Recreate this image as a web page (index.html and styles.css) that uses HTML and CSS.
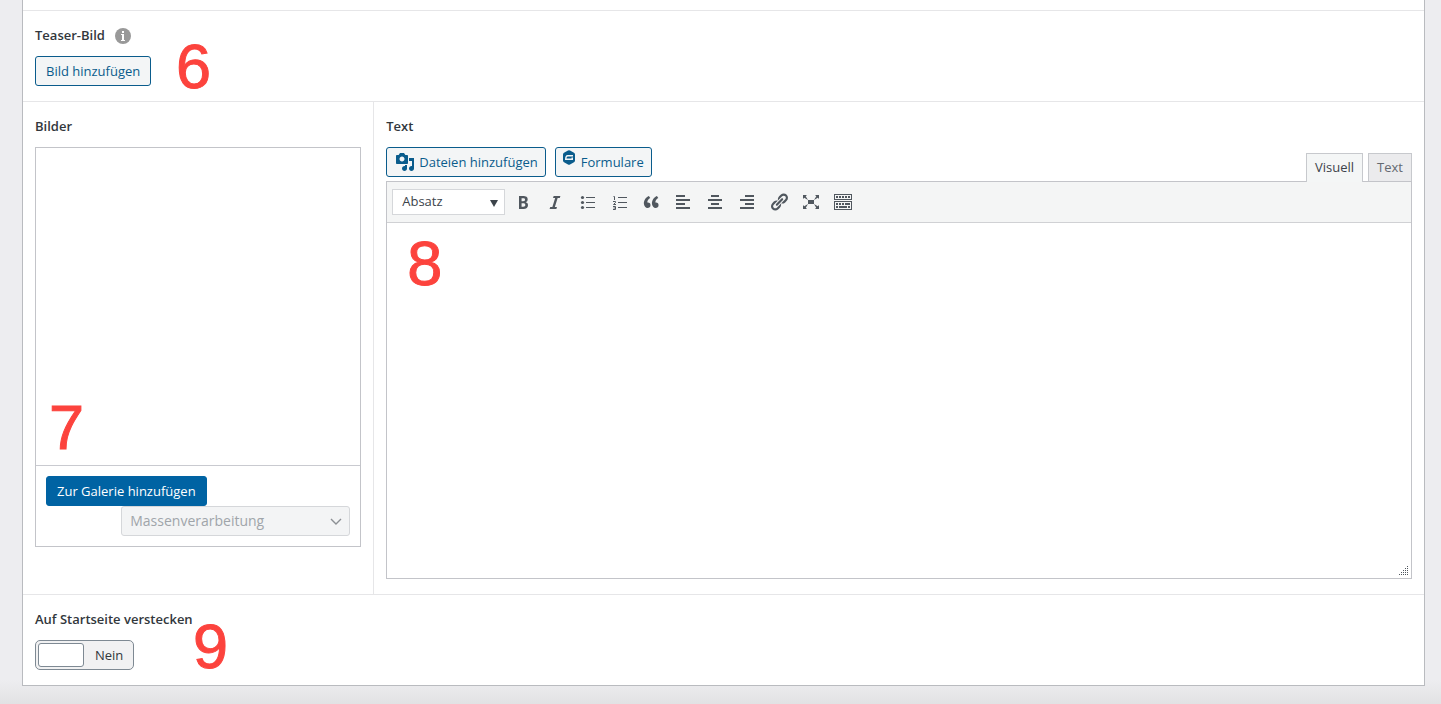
FILE: index.html
```html
<!DOCTYPE html>
<html lang="de">
<head>
  <meta charset="UTF-8" />
  <meta name="viewport" content="width=device-width, initial-scale=1.0"/>
  <title>Beitrag bearbeiten</title>
  <link rel="stylesheet" href="styles.css">
</head>
<body>
  <form class="panel">
    <section class="field">
      <div class="field-label">
        <h2>Teaser-Bild</h2>
        <svg class="info" viewBox="0 0 16 16" aria-hidden="true"><circle cx="8" cy="8" r="8" fill="#999"/><path fill="#fff" d="M7 3h2v2H7zM6 6h3v6h1v1H6v-1h1V7H6z"/></svg>
      </div>
      <button type="button" class="button">Bild hinzufügen</button>
      <span class="mark mark-6">6</span>
    </section>

    <div class="columns">
      <section class="field">
        <div class="field-label"><h2>Bilder</h2></div>
        <div class="gallery">
          <div class="gallery-list"></div>
          <div class="gallery-toolbar">
            <button type="button" class="button button-primary">Zur Galerie hinzufügen</button>
            <div class="select-wrap bulk">
              <select aria-label="Massenverarbeitung" disabled>
                <option>Massenverarbeitung</option>
              </select>
              <svg viewBox="0 0 12 8" aria-hidden="true"><path d="M1 1l5 5 5-5" fill="none" stroke="#8c8f94" stroke-width="1.4"/></svg>
            </div>
          </div>
        </div>
        <span class="mark mark-7">7</span>
      </section>

      <section class="field">
        <div class="field-label"><label for="content">Text</label></div>
        <div class="editor-tools">
          <button type="button" class="button media">
            <svg viewBox="0 0 20 20" aria-hidden="true"><path d="M13 11V4c0-.55-.45-1-1-1h-1.67L9 1H5L3.67 3H2c-.55 0-1 .45-1 1v7c0 .55.45 1 1 1h10c.55 0 1-.45 1-1zM7 4.5c1.38 0 2.5 1.12 2.5 2.5S8.38 9.5 7 9.5 4.5 8.38 4.5 7 5.62 4.5 7 4.5zM14 6h5v10.5c0 1.38-1.12 2.5-2.5 2.5S14 17.88 14 16.5s1.12-2.5 2.5-2.5c.17 0 .34.02.5.05V9h-3V6zm-4 8.05V13h2v3.5c0 1.38-1.12 2.5-2.5 2.5S7 17.88 7 16.5 8.12 14 9.5 14c.17 0 .34.02.5.05z"/></svg>
            Dateien hinzufügen
          </button>
          <button type="button" class="button forms">
            <svg viewBox="0 0 14 16" aria-hidden="true"><path fill-rule="evenodd" d="M6 .6q1-.6 2 0l4 2.2q1 .6 1 1.700v6q0 1.100-1 1.700l-4 2.300q-1 .6-2 0l-4-2.300q-1-.6-1-1.700v-6q0-1.100 1-1.700zM5.500 5C4 5 3 6.500 3 10h8V7.500H9.500v1h-5c.1-1.300.5-2 1.300-2H11V5z"/></svg>
            Formulare
          </button>
          <div class="tabs">
            <button type="button" class="tab active">Visuell</button>
            <button type="button" class="tab">Text</button>
          </div>
        </div>
        <div class="editor">
          <div class="toolbar">
            <div class="select-wrap format">
              <select aria-label="Format">
                <option>Absatz</option>
              </select>
              <svg viewBox="0 0 8 7" aria-hidden="true"><path d="M0 0h8L4 7z" fill="#3c434a"/></svg>
            </div>
            <button type="button" aria-label="Fett"><svg viewBox="0 0 20 20"><path d="M6 4v13h4.54c1.37 0 2.46-.33 3.26-1 .8-.66 1.2-1.58 1.2-2.77 0-.84-.17-1.51-.51-2.01s-.9-.85-1.67-1.03v-.09c.57-.1 1.02-.4 1.36-.9s.51-1.13.51-1.91c0-1.14-.39-1.98-1.17-2.5C12.75 4.26 11.5 4 9.78 4H6zm2.57 5.15V6.26h1.36c.73 0 1.27.11 1.61.32.34.22.51.58.51 1.07 0 .54-.16.92-.47 1.15s-.82.35-1.51.35h-1.5zm0 2.19h1.6c1.44 0 2.16.53 2.16 1.61 0 .6-.17 1.05-.51 1.34s-.86.43-1.57.43H8.57v-3.38z"/></svg></button>
            <button type="button" aria-label="Kursiv"><svg viewBox="0 0 20 20"><path d="M14.78 6h-2.13l-2.8 9h2.12l-.62 2H4.6l.62-2h2.14l2.8-9H8.03l.62-2h6.75z"/></svg></button>
            <button type="button" aria-label="Liste"><svg viewBox="0 0 20 20"><circle cx="5.500" cy="5.500" r="1.600"/><circle cx="5.500" cy="10.500" r="1.600"/><circle cx="5.500" cy="15.500" r="1.600"/><path d="M9 5h9v1H9zM9 10h9v1H9zM9 15h9v1H9z"/></svg></button>
            <button type="button" aria-label="Nummerierte Liste"><svg viewBox="0 0 20 20"><path d="M9 5h9v1H9zM9 10h9v1H9zM9 15h9v1H9z"/><path fill="none" stroke="#50575e" d="M4.500 4.500h1V8M4 9.500h2.500v1L4.500 12.500h2.500M4 14.500h2.500v3H4M4.500 16h2"/></svg></button>
            <button type="button" aria-label="Zitat"><svg viewBox="0 0 20 20"><path d="M9.49 13.22c0-.74-.2-1.38-.61-1.9-.62-.78-1.83-.88-2.53-.72-.29-1.65 1.11-3.75 2.92-4.65L7.88 4c-2.73 1.3-5.42 4.28-4.96 8.05C3.21 14.43 4.59 16 6.54 16c.85 0 1.56-.25 2.12-.75s.83-1.18.83-2.03zm8.05 0c0-.74-.2-1.38-.61-1.9-.63-.78-1.83-.88-2.53-.72-.29-1.65 1.11-3.75 2.92-4.65L15.93 4c-2.73 1.3-5.41 4.28-4.95 8.05.29 2.38 1.66 3.95 3.61 3.95.85 0 1.56-.25 2.12-.75s.83-1.18.83-2.03z"/></svg></button>
            <button type="button" aria-label="Linksbündig"><svg viewBox="0 0 20 20"><path d="M3 3h9v2H3zM3 7h14v2H3zM3 11h9v2H3zM3 15h14v2H3z"/></svg></button>
            <button type="button" aria-label="Zentriert"><svg viewBox="0 0 20 20"><path d="M6 3h8v2H6zM3 7h14v2H3zM6 11h8v2H6zM3 15h14v2H3z"/></svg></button>
            <button type="button" aria-label="Rechtsbündig"><svg viewBox="0 0 20 20"><path d="M8 3h9v2H8zM3 7h14v2H3zM8 11h9v2H8zM3 15h14v2H3z"/></svg></button>
            <button type="button" aria-label="Link"><svg viewBox="0 0 20 20"><path d="M17.74 2.76c1.68 1.69 1.68 4.41 0 6.1l-1.53 1.52c-1.12 1.12-2.7 1.47-4.14 1.09l2.62-2.61.76-.77.76-.76c.84-.84.84-2.2 0-3.04-.84-.85-2.2-.85-3.04 0l-.77.76-3.38 3.38c-.37-1.44-.02-3.02 1.1-4.14l1.52-1.53c1.69-1.68 4.42-1.68 6.1 0zM8.59 13.43l5.34-5.34c.42-.42.42-1.1 0-1.52-.44-.43-1.13-.39-1.53 0l-5.33 5.34c-.42.42-.42 1.1 0 1.52.44.43 1.13.39 1.52 0zm-.76 2.29l4.14-4.15c.38 1.44.03 3.02-1.09 4.14l-1.52 1.53c-1.69 1.68-4.41 1.68-6.1 0-1.68-1.68-1.68-4.42 0-6.1l1.53-1.52c1.12-1.12 2.7-1.47 4.14-1.1l-4.14 4.15c-.85.84-.85 2.2 0 3.05.84.84 2.2.84 3.04 0z"/></svg></button>
            <button type="button" aria-label="Vollbild"><svg viewBox="0 0 20 20"><path d="M7 8h6v4H7zm-5 5v4h4l-1.200-1.200L7 12l-3.800 2.200M14 17h4v-4l-1.200 1.200L13 12l2.200 3.800M14 3l1.300 1.300L13 8l3.800-2.200L18 7V3M6 3H2v4l1.200-1.200L7 8 4.700 4.300"/></svg></button>
            <button type="button" aria-label="Werkzeugleiste umschalten"><svg viewBox="0 0 20 20"><path fill-rule="evenodd" d="M1 2h18v6H1zM2 3v4h16V3zM1 9h18v9H1zM2 10v7h16v-7z"/><path d="M3 4h2v2H3zM6 4h2v2H6zM9 4h2v2H9zM12 4h2v2h-2zM15 4h2v2h-2zM3 11h2v2H3zM6 11h2v2H6zM9 11h2v2H9zM12 11h5v2h-5zM3 14h2v2H3zM6 14h8v2H6zM15 14h2v2h-2z"/></svg></button>
          </div>
          <textarea id="content"></textarea>
          <svg class="grip" viewBox="0 0 10 10" aria-hidden="true"><path d="M8 0h1v1H8zM6 2h1v1H6zM8 2h1v1H8zM4 4h1v1H4zM6 4h1v1H6zM8 4h1v1H8zM2 6h1v1H2zM4 6h1v1H4zM6 6h1v1H6zM8 6h1v1H8zM0 8h1v1H0zM2 8h1v1H2zM4 8h1v1H4zM6 8h1v1H6zM8 8h1v1H8z"/></svg>
        </div>
        <span class="mark mark-8">8</span>
      </section>
    </div>

    <section class="field">
      <div class="field-label"><label for="hide">Auf Startseite verstecken</label></div>
      <label class="switch">
        <input type="checkbox" id="hide">
        <span class="slider"></span>
        <span class="switch-off">Nein</span>
      </label>
      <span class="mark mark-9">9</span>
    </section>
  </form>
</body>
</html>
```

FILE: styles.css
```css
* {
  box-sizing: border-box;
}
body {
  margin: 0;
  padding: 0 16px 18px 22px;
  min-height: 100vh;
  background: linear-gradient(to top, #e2e2e4, #ededf0 24px);
  color: #32373c;
  font-family: "Open Sans", sans-serif;
  font-size: 13px;
  line-height: 20px;
}
button, select, textarea {
  font: inherit;
  color: inherit;
}
.panel {
  padding-top: 10px;
  background: #fff;
  border: 1px solid #b9bbbf;
  border-top: 0;
}

/* fields */
.field {
  position: relative;
  padding: 15px 12px;
  border-top: 1px solid #e6e6e8;
}
.field-label {
  display: flex;
  align-items: flex-end;
  gap: 10px;
  margin-bottom: 12px;
  font-weight: 600;
  line-height: 18px;
}
.field-label h2 {
  margin: 0;
  font-size: 13px;
  font-weight: 600;
}
.info {
  width: 16px;
  height: 16px;
}
.columns {
  display: grid;
  grid-template-columns: 1fr 3fr;
}
.columns .field + .field {
  border-left: 1px solid #e6e6e8;
}
.button {
  display: inline-flex;
  align-items: center;
  height: 30px;
  padding: 0 10px;
  background: #f3f5f6;
  border: 1px solid #0a5c8c;
  border-radius: 3px;
  color: #0a5c8c;
  white-space: nowrap;
}
.button-primary {
  background: #0063a3;
  border-color: #0063a3;
  color: #fff;
}

/* gallery */
.gallery {
  display: flex;
  flex-direction: column;
  height: 400px;
  border: 1px solid #c3c4c9;
}
.gallery-list {
  flex: 1;
}
.gallery-toolbar {
  display: flex;
  flex-direction: column;
  align-items: flex-start;
  padding: 10px;
  border-top: 1px solid #c9cad0;
}
.select-wrap {
  position: relative;
}
.select-wrap select {
  appearance: none;
  width: 100%;
  height: 100%;
  padding: 0 8px;
  border: 1px solid #d5d7da;
  background: #fff;
}
.select-wrap svg {
  position: absolute;
  pointer-events: none;
}
.bulk {
  align-self: flex-end;
  width: 75%;
  min-width: 229px;
  height: 30px;
}
.bulk select {
  background: #f3f4f5;
  border-radius: 3px;
  color: #a0a5aa;
  font-size: 14px;
  opacity: 1;
}
.bulk svg {
  top: 12px;
  right: 8px;
  width: 12px;
  height: 8px;
}

/* editor */
.editor-tools {
  display: flex;
  gap: 9px;
  height: 34px;
}
.media {
  gap: 4px;
  padding: 0 7px 0 8px;
}
.media svg {
  width: 20px;
  height: 20px;
  fill: #0a5c8c;
}
.forms {
  gap: 5px;
  padding: 0 7px 0 6px;
}
.forms svg {
  align-self: flex-start;
  width: 14px;
  height: 16px;
  margin-top: 2px;
  fill: #0a5c8c;
}
.tabs {
  display: flex;
  gap: 5px;
  margin-left: auto;
  padding-top: 6px;
}
.tab {
  height: 28px;
  padding: 0 8px 2px;
  background: #ebebed;
  border: 1px solid #c7c9cd;
  border-bottom: 0;
  color: #646970;
}
.tab.active {
  position: relative;
  z-index: 1;
  height: 29px;
  padding-bottom: 3px;
  background: #f4f6f6;
  color: #3c434a;
}
.editor {
  position: relative;
  border: 1px solid #c3c4c9;
}
.toolbar {
  display: flex;
  align-items: center;
  height: 41px;
  padding-left: 5px;
  background: #f4f5f5;
  border-bottom: 1px solid #d0d1d4;
}
.toolbar button {
  width: 32px;
  height: 32px;
  padding: 6px;
  border: 0;
  background: none;
}
.toolbar svg {
  display: block;
  fill: #50575e;
}
.toolbar button svg {
  width: 20px;
  height: 20px;
}
.format {
  width: 113px;
  height: 26px;
  margin-right: 2px;
}
.format select {
  padding: 0 9px 2px;
  color: #3c434a;
}
.format svg {
  top: 11px;
  right: 7px;
  width: 8px;
  height: 7px;
}
.editor textarea {
  display: block;
  width: 100%;
  height: 355px;
  padding: 10px;
  border: 0;
  resize: none;
}
.grip {
  position: absolute;
  right: 2px;
  bottom: 2px;
  width: 10px;
  height: 10px;
  fill: #50575e;
}

/* switch */
.switch {
  display: inline-flex;
  align-items: center;
  height: 30px;
  padding: 0 10px 0 2px;
  background: #f1f1f2;
  border: 1px solid #7e8993;
  border-radius: 5px;
  vertical-align: top;
}
.switch input {
  position: absolute;
  opacity: 0;
}
.slider {
  width: 46px;
  height: 24px;
  margin-right: 11px;
  background: #fff;
  border: 1px solid #7e8993;
  border-radius: 3px;
}

/* numbered marks over the fields */
.mark {
  position: absolute;
  color: #fc433d;
  font: 63px/64px "Liberation Sans", Arial, sans-serif;
  -webkit-text-stroke: 1px #fc433d;
  pointer-events: none;
}
.mark-6 {
  top: 23px;
  left: 153px;
}
.mark-7 {
  top: 293px;
  left: 26px;
}
.mark-8 {
  top: 129px;
  left: 33px;
}
.mark-9 {
  top: 19px;
  left: 170px;
}
```
